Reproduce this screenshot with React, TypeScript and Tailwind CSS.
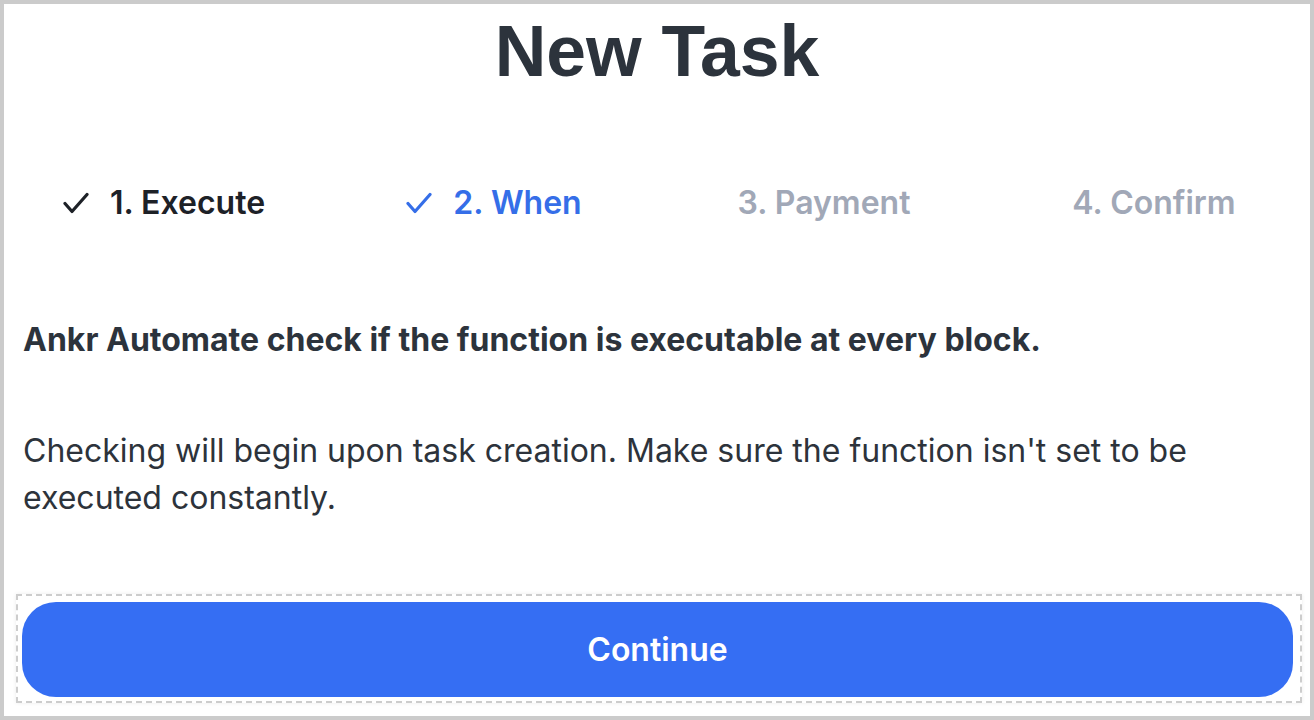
import React from 'react'

interface Step {
  label: string
  state: 'done' | 'active' | 'todo'
}

const steps: Step[] = [
  { label: '1. Execute', state: 'done' },
  { label: '2. When', state: 'active' },
  { label: '3. Payment', state: 'todo' },
  { label: '4. Confirm', state: 'todo' },
]

function Check({ className }: { className: string }) {
  return (
    <svg viewBox="0 0 26 22" className={className} fill="none" stroke="currentColor" strokeWidth="3.2" strokeLinecap="round" strokeLinejoin="round">
      <polyline points="2,11.5 9,19.5 24,2.5" />
    </svg>
  )
}

export default function App() {
  return (
    <div className="h-screen w-full overflow-hidden border-4 border-[#cbcbcb] bg-white font-['Inter',sans-serif]">
      <div className="flex flex-col px-[19px]">
        <h1 className="mt-[12px] text-center font-['Liberation_Sans',Arial,sans-serif] text-[71.5px] font-bold leading-[70px] text-[#2c333c]">
          New Task
        </h1>

        {/* stepper */}
        <div className="mt-[97px] grid grid-cols-4 gap-x-[56px] pl-[4px]">
          {steps.map((step) => (
            <div
              key={step.label}
              className={`flex items-center justify-center gap-[21px] text-[32px] font-semibold leading-[40px] ${
                step.state === 'done' ? 'text-[#1d2127]' : step.state === 'active' ? 'text-[#356ee8]' : 'text-[#a1a8b7]'
              }`}
            >
              {step.state !== 'todo' && <Check className="h-[22px] w-[26px]" />}
              <span>{step.label}</span>
            </div>
          ))}
        </div>

        <p className="mt-[97px] text-[32px] font-bold leading-[40px] text-[#2c333c]">
          Ankr Automate check if the function is executable at every block.
        </p>

        <p className="mt-[67px] text-[32px] leading-[47px] text-[#2d333b]">
          Checking will begin upon task creation. Make sure the function isn't set to be executed constantly.
        </p>

        <div className="mt-[73px] -ml-[7px] w-[1286px] border-2 border-dashed border-[#cdcdcd] pt-[6px] pr-[7px] pb-[4px] pl-[4px] shadow-[0_0_4px_rgba(0,0,0,0.08)]">
          <button className="flex h-[95px] w-full items-center justify-center rounded-[34px] bg-[#356ef3] text-[32px] font-semibold text-white">
            Continue
          </button>
        </div>
      </div>
    </div>
  )
}
